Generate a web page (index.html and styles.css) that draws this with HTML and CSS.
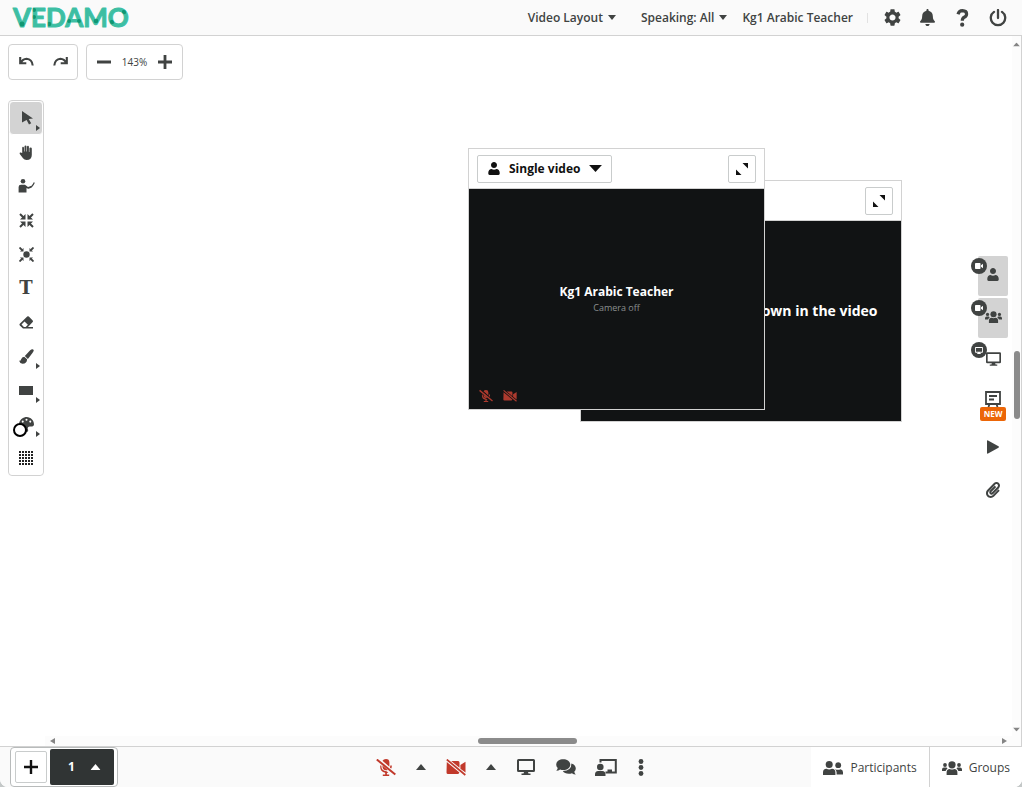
FILE: index.html
```html
<!DOCTYPE html>
<html lang="en">
<head>
<meta charset="utf-8">
<meta name="viewport" content="width=device-width, initial-scale=1">
<title>Vedamo classroom</title>
<link rel="stylesheet" href="styles.css">
</head>
<body>
<svg class="sprite" aria-hidden="true">
  <symbol id="user" viewBox="0 0 448 512"><path d="M224 240c66 0 118-54 118-120S290 0 224 0 106 54 106 120s52 120 118 120zM130 276C55 276 0 340 0 415v50c0 26 21 47 48 47h352c27 0 48-21 48-47v-50c0-75-55-139-130-139-26 17-58 26-94 26s-68-9-94-26z"/></symbol>
  <symbol id="users" viewBox="0 0 20 14"><circle cx="10" cy="3.800" r="3.600"/><path d="M4.600 14V11.500q0-3.500 3.200-3.500q2.200 1 4.400 0q3.200 0 3.200 3.500V14z"/><circle cx="3" cy="4" r="1.900"/><circle cx="17" cy="4" r="1.900"/><path d="M0 10V8.500Q0 6.500 2 6.500H4.500L5.500 7.500Q4 8.500 3.600 10zM20 10V8.500Q20 6.500 18 6.500H15.500L14.500 7.500Q16 8.500 16.400 10z"/></symbol>
  <symbol id="pair" viewBox="0 0 20 14"><circle cx="6.200" cy="3.500" r="3.500"/><path d="M0 14V11.500Q0 7.800 3.500 7.800Q6 9 9 7.800Q12.400 7.800 12.400 11.500V14z"/><circle cx="15.200" cy="4.200" r="2.900"/><path d="M12 8.200Q15 9.200 17.500 8.200Q20 8.500 20 11.200V13.500H13.600V11.500Q13.600 9.500 12 8.200z"/></symbol>
  <symbol id="cam" viewBox="0 0 16 12"><rect width="11" height="12" rx="1.500"/><path d="M12 4.500L16 1.500V10.500L12 7.500z"/></symbol>
  <symbol id="screen" viewBox="0 0 18 16"><path fill-rule="evenodd" d="M1.500 0H16.500Q18 0 18 1.500V11.500Q18 13 16.500 13H11L11.500 14.500H13.500V16H4.500V14.500H6.500L7 13H1.500Q0 13 0 11.500V1.500Q0 0 1.500 0zM2 2V11H16V2z"/></symbol>
  <symbol id="micoff" viewBox="0 0 20 17"><path d="M6.500 1.800Q7.500 0 10 0Q13.400 0 13.400 3.400V7.800zM6.500 6.500L11.800 11Q6.500 12 6.500 7.500zM14.300 6.500H15.800Q15.900 8.400 15.200 9.600L14 8.700zM4.200 6.500H5.400Q5 11.600 10.500 12.300L12.400 13.500L10.900 13.900V15.500H13.200V17H6.800V15.500H9.200V13.800Q4.200 12.800 4.200 8z"/><path d="M.8.500L19.300 15.600" fill="none" stroke="currentColor" stroke-width="2"/></symbol>
  <symbol id="camoff" viewBox="0 0 20 17"><path d="M5.200 2H12.200Q13.500 2 13.500 3.500V8.700zM.8 3L13.400 13.600Q13 15 12 15H2Q.5 15 .5 13.500zM14.400 6L19.500 2.700V13.600L14.400 9.700z"/><path d="M.8.500L19.300 16" fill="none" stroke="currentColor" stroke-width="1.700"/></symbol>
  <symbol id="up" viewBox="0 0 10 6"><path d="M5 0L10 6H0z"/></symbol>
  <symbol id="down" viewBox="0 0 10 6"><path d="M0 0H10L5 6z"/></symbol>
  <symbol id="expand" viewBox="0 0 12 12"><path d="M6.500 0H12V5.500zM0 6.500V12H5.500z"/></symbol>
  <symbol id="plus" viewBox="0 0 14 14"><path d="M5.600 0H8.400V5.600H14V8.400H8.400V14H5.600V8.400H0V5.600H5.600z"/></symbol>
  <symbol id="bend" viewBox="0 0 15 10"><path d="M1.200 0V6.300H7.300M2 5.800Q3.500 2 7.600 1.800Q13 2.200 13.700 8.500" fill="none" stroke="currentColor" stroke-width="2.100"/></symbol>
</svg>

<div class="app">
  <header class="topbar">
    <a class="brand" href="#" aria-label="Vedamo">
      <svg width="122" height="26" viewBox="0 0 122 26">
        <defs>
          <pattern id="logo-fill" patternUnits="userSpaceOnUse" width="122" height="26">
            <rect width="122" height="26" fill="#3dbea3"/>
            <g fill="#0f9672"><circle cx="10" cy="19" r="2.500"/><circle cx="22" cy="5" r="2"/><circle cx="22" cy="12" r="2"/><circle cx="37" cy="19" r="2.300"/><circle cx="57" cy="16" r="2"/><circle cx="67" cy="16" r="2"/><circle cx="84" cy="16" r="2.300"/><circle cx="112" cy="7" r="2.200"/><circle cx="100" cy="17" r="2.200"/></g>
          </pattern>
        </defs>
        <text x="1" y="22">VEDAMO</text>
      </svg>
    </a>
    <nav class="menus">
      <button class="menu">Video Layout <svg class="caret"><use href="#down"/></svg></button>
      <button class="menu">Speaking: All <svg class="caret"><use href="#down"/></svg></button>
      <span class="who">Kg1 Arabic Teacher</span>
    </nav>
    <div class="actions">
      <button aria-label="Settings"><svg width="17" height="17" viewBox="2 2 20 20"><path d="M19.140 12.940c.04-.3.06-.61.06-.94 0-.32-.02-.64-.07-.94l2.030-1.580c.18-.14.23-.41.12-.61l-1.920-3.320c-.12-.22-.37-.29-.59-.22l-2.390.96c-.5-.38-1.030-.7-1.620-.94l-.36-2.540c-.04-.24-.24-.41-.48-.41h-3.840c-.24 0-.43.17-.47.41l-.36 2.540c-.59.24-1.130.57-1.620.94l-2.390-.96c-.22-.08-.47 0-.59.22L2.740 8.870c-.12.21-.08.47.12.61l2.030 1.580c-.05.3-.09.63-.09.94s.02.64.07.94l-2.030 1.580c-.18.14-.23.41-.12.61l1.920 3.320c.12.22.37.29.59.22l2.390-.96c.5.38 1.030.7 1.620.94l.36 2.540c.05.24.24.41.48.41h3.840c.24 0 .44-.17.47-.41l.36-2.540c.59-.24 1.130-.56 1.620-.94l2.390.96c.22.08.47 0 .59-.22l1.920-3.320c.12-.22.07-.47-.12-.61l-2.010-1.580zM12 15.600c-1.980 0-3.600-1.620-3.600-3.600s1.620-3.600 3.600-3.600 3.600 1.620 3.600 3.600-1.620 3.600-3.600 3.600z"/></svg></button>
      <button aria-label="Notifications"><svg width="15" height="17" viewBox="0 0 448 512"><path d="M224 512c35 0 64-29 64-64H160c0 35 29 64 64 64zm215-150c-19-21-55-52-55-154 0-78-54-140-128-155V32c0-18-14-32-32-32s-32 14-32 32v21C119 68 64 130 64 208c0 102-36 133-55 154-6 6-9 14-9 22 0 16 13 32 32 32h384c19 0 32-16 32-32 0-8-3-15-9-22z"/></svg></button>
      <button aria-label="Help"><svg width="13" height="18" viewBox="0 0 13 18"><path d="M2 5.200Q3 1.800 6.400 1.700Q10.600 1.900 10.600 5Q10.600 7.200 8.200 8.300Q6.300 9.200 6.300 11.800" fill="none" stroke="currentColor" stroke-width="3.200"/><circle cx="6.200" cy="15.700" r="2.100"/></svg></button>
      <button aria-label="Leave"><svg width="18" height="18" viewBox="0 0 18 18"><path d="M5 2.900A7.200 7.200 0 1 0 13 2.900M9 1V9" fill="none" stroke="currentColor" stroke-width="2.300" stroke-linecap="round"/></svg></button>
    </div>
  </header>

  <main class="board">
    <div class="stage">
      <div class="history">
        <div class="group">
          <button aria-label="Undo"><svg width="15" height="10"><use href="#bend"/></svg></button>
          <button aria-label="Redo"><svg class="flip" width="15" height="10"><use href="#bend"/></svg></button>
        </div>
        <div class="group zoom">
          <button aria-label="Zoom out"><svg width="14" height="14" viewBox="0 0 14 14"><path d="M0 5.500H14V8.500H0z"/></svg></button>
          <span>143%</span>
          <button aria-label="Zoom in"><svg width="14" height="14"><use href="#plus"/></svg></button>
        </div>
      </div>

      <div class="tools">
        <button class="more on" aria-label="Select"><svg width="13" height="14" viewBox="0 0 13 14"><path d="M2 0L13 7.500L8.700 8L11.200 12.300L9 13.500L6.600 9L2 11.500z"/></svg></button>
        <button aria-label="Pan"><svg width="14" height="15" viewBox="0 0 14 15"><path d="M3.200 8V3Q3.200 1.800 4 1.800Q4.900 1.800 5 3V6.500H5.500V1.500Q5.600.4 6.500.4Q7.400.4 7.500 1.500V6.500H8V1.700Q8.100.7 9 .7Q9.800.7 9.900 1.700V7H10.400V3.500Q10.500 2.500 11.500 2.500Q12.800 2.600 12.800 3.500V10Q12.800 15 7.500 15Q5.300 15 4 13.300L.8 8.900Q.3 8 1.100 7.500Q2 7.100 3.200 8z"/></svg></button>
        <button aria-label="Presenter pointer"><svg width="17" height="14" viewBox="0 0 17 14"><circle cx="5" cy="2.300" r="2.300"/><path d="M.6 13.500V8Q.6 5.700 3 5.700H7L10 8.100L13 7L13.500 8.200L10 9.800L8.500 9V13.500z"/><path d="M10 9Q14 9 16.300 3.500" fill="none" stroke="currentColor" stroke-width="1.200"/></svg></button>
        <button aria-label="Gather all"><svg width="15" height="15" viewBox="0 0 15 15"><path d="M1 1L4.500 4.500M14 1L10.500 4.500M1 14L4.500 10.500M14 14L10.500 10.500" fill="none" stroke="currentColor" stroke-width="2"/><path d="M6.500 1V6.500H1zM8.500 1V6.500H14zM6.500 14V8.500H1zM8.500 14V8.500H14z"/></svg></button>
        <button aria-label="Focus here"><svg width="15" height="15" viewBox="0 0 15 15"><circle cx="7.500" cy="7.500" r="3.200"/><path d="M.5.500L3 3M14.500.500L12 3M.5 14.500L3 12M14.500 14.500L12 12" fill="none" stroke="currentColor" stroke-width="1.800"/><path d="M4.500 1V4.500H1zM10.500 1V4.500H14zM4.500 14V10.500H1zM10.500 14V10.500H14z"/></svg></button>
        <button class="type" aria-label="Text">T</button>
        <button aria-label="Eraser"><svg width="15" height="13" viewBox="0 0 15 13"><path fill-rule="evenodd" d="M8.200.6Q9 0 9.800.6L13.700 4.500Q14.400 5.300 13.700 6.100L9 11H14V12.600H4L.8 9.400Q0 8.500.8 7.700zM5.500 5.500L2.500 8.500L4.900 10.900H6.700L8.900 8.700z"/></svg></button>
        <button class="more" aria-label="Brush"><svg width="15" height="15" viewBox="0 0 15 15"><path d="M12.300.4Q14.300-.4 14.800 1.600Q14.300 3.500 8.900 9.900L5.800 7Q10.500 1.500 12.300.4zM5.200 7.700L8.100 10.300Q8 14.700 3.500 14.800Q.8 14.500 0 11.500Q1.600 12.500 2 10.500Q2.900 7.700 5.200 7.700z"/></svg></button>
        <button class="more" aria-label="Rectangle"><svg width="14" height="9" viewBox="0 0 14 9"><path d="M0 0H14V9H0z"/></svg></button>
        <button class="more colour" aria-label="Colour"><svg width="15" height="15" viewBox="0 0 512 512"><path d="M204 5C105 24 25 104 5 203c-37 187 132 327 259 307 41-6 61-55 42-92-23-45 10-98 61-98h80c36 0 65-30 65-65C512 97 368-27 204 5zM96 320a35 35 0 1 1 0-70 35 35 0 0 1 0 70zm32-128a35 35 0 1 1 0-70 35 35 0 0 1 0 70zm128-64a35 35 0 1 1 0-70 35 35 0 0 1 0 70zm128 64a35 35 0 1 1 0-70 35 35 0 0 1 0 70z"/></svg></button>
        <button aria-label="Grid"><svg width="14" height="14" viewBox="0 0 14 14"><path d="M0 1H14M0 4H14M0 7H14M0 10H14M0 13H14" stroke="#222" stroke-width="2" stroke-dasharray="2 1"/></svg></button>
      </div>
    </div>

    <section class="window back" aria-label="Group video">
      <div class="bar"><span></span><button class="square" aria-label="Expand"><svg width="12" height="12"><use href="#expand"/></svg></button></div>
      <div class="feed"><p class="notice">There are no guests shown in the video layout</p></div>
    </section>
    <section class="window front" aria-label="Single video">
      <div class="bar">
        <button class="pick"><svg width="12" height="13"><use href="#user"/></svg><span>Single video</span><svg width="13" height="7" viewBox="0 0 11 6"><path d="M0 0H11L5.500 6z"/></svg></button>
        <button class="square" aria-label="Expand"><svg width="12" height="12"><use href="#expand"/></svg></button>
      </div>
      <div class="feed person">
        <p class="name">Kg1 Arabic Teacher</p>
        <p class="state">Camera off</p>
        <div class="muted"><svg width="14" height="14"><use href="#micoff"/></svg><svg width="14" height="14"><use href="#camoff"/></svg></div>
      </div>
    </section>

    <div class="panels">
      <button class="panel on" aria-label="Single video window"><span class="badge"><svg width="8" height="6"><use href="#cam"/></svg></span><svg width="12" height="13"><use href="#user"/></svg></button>
      <button class="panel on" aria-label="Group video window"><span class="badge"><svg width="8" height="6"><use href="#cam"/></svg></span><svg width="17" height="12"><use href="#users"/></svg></button>
      <button class="panel" aria-label="Screen share"><span class="badge"><svg width="8" height="7"><use href="#screen"/></svg></span><svg width="15" height="14"><use href="#screen"/></svg></button>
      <button class="panel tall fresh" aria-label="Whiteboards"><svg width="16" height="16" viewBox="0 0 16 16"><path d="M1 1H15V13H1zM4 5H12M4 8.500H9M4.500 13L3.500 16M11.500 13L12.500 16" fill="none" stroke="currentColor" stroke-width="1.800"/></svg><span class="new">NEW</span></button>
      <button class="panel tall" aria-label="Play media"><svg width="12" height="14" viewBox="0 0 12 14"><path d="M0 1Q0 0 1 .4L11.500 6.300Q12.300 7 11.500 7.700L1 13.600Q0 14 0 13z"/></svg></button>
      <button class="panel last" aria-label="Files"><svg width="14" height="16" viewBox="0 0 448 512"><path d="M43 466c-58-60-57-157 2-217L254 34c45-45 117-45 161 0 44 45 44 117 0 162L232 383c-30 31-78 30-108-1-28-30-27-77 2-107l143-147c7-6 17-6 23 0l23 23c6 6 6 16 0 22L171 320c-5 5-5 13 0 18 4 5 11 5 15 0l183-186c20-21 20-53 0-73-19-20-50-20-69 0L90 293c-34 36-35 93-1 129 34 35 89 35 123 0l172-176c7-6 17-6 23 0l23 22c6 6 6 16 0 23L258 467c-60 60-156 60-215-1z"/></svg></button>
    </div>
    <div class="vscroll"><svg width="7" height="5" viewBox="0 0 10 6"><use href="#up"/></svg><span class="thumb"></span><svg width="7" height="5" viewBox="0 0 10 6"><use href="#down"/></svg></div>
    <div class="hscroll"><svg width="5" height="6" viewBox="0 0 5 6"><path d="M5 0V6L0 3z"/></svg><span class="thumb"></span><svg width="5" height="6" viewBox="0 0 5 6"><path d="M0 0V6L5 3z"/></svg></div>
  </main>

  <footer class="dock">
    <div class="pages">
      <button class="add" aria-label="Add page"><svg width="14" height="14" viewBox="0 0 14 14"><path d="M5.800 0H8.200V5.800H14V8.200H8.200V14H5.800V8.200H0V5.800H5.800z"/></svg></button>
      <button class="page"><span>1</span><svg width="11" height="6" viewBox="0 0 10 6"><use href="#up"/></svg></button>
    </div>
    <div class="media">
      <button class="off" aria-label="Microphone off"><svg width="20" height="17"><use href="#micoff"/></svg></button>
      <button class="slim" aria-label="Microphone options"><svg width="10" height="6"><use href="#up"/></svg></button>
      <button class="off" aria-label="Camera off"><svg width="20" height="17"><use href="#camoff"/></svg></button>
      <button class="slim" aria-label="Camera options"><svg width="10" height="6"><use href="#up"/></svg></button>
      <button aria-label="Share screen"><svg width="18" height="16"><use href="#screen"/></svg></button>
      <button aria-label="Chat"><svg width="20" height="16" viewBox="0 0 20 16"><path d="M7.200.3C11.200.3 14.300 2.700 14.300 5.700S11.200 11 7.200 11Q5.600 11 4.200 10.500Q2.500 11.700.3 11.700Q1.600 10.300 1.700 9Q.2 7.500.2 5.700C.2 2.700 3.200.3 7.200.3z"/><path d="M15.400 4.400Q19.800 5.800 19.800 9.500Q19.800 11.300 18.300 12.800Q18.500 14.200 19.800 15.600Q17.600 15.600 15.900 14.300Q14.500 14.800 12.800 14.800Q8.500 14.700 6.800 12.100Q15.500 11.700 15.400 4.400z"/></svg></button>
      <button aria-label="Teaching mode"><svg width="22" height="17" viewBox="0 0 22 17"><circle cx="5.300" cy="8" r="3.300"/><path d="M0 17V15.500Q0 12 3.200 12H7.400Q10.500 12 10.500 15.500V17zM12.500 13V10.500H17V13z"/><path d="M5.500 3.500V1H20.800V13.500H10.500" fill="none" stroke="currentColor" stroke-width="2"/></svg></button>
      <button class="slim" aria-label="More"><svg width="6" height="17" viewBox="0 0 6 17"><circle cx="3" cy="2.500" r="2.400"/><circle cx="3" cy="8.500" r="2.400"/><circle cx="3" cy="14.500" r="2.400"/></svg></button>
    </div>
    <div class="people">
      <button><svg width="20" height="14"><use href="#pair"/></svg>Participants</button>
      <button><svg width="20" height="14"><use href="#users"/></svg>Groups</button>
    </div>
  </footer>
</div>
</body>
</html>
```
FILE: styles.css
```css
* { box-sizing: border-box; }
html, body { height: 100%; }
body { margin: 0; background: #c4c8c8; color: #404342; font: 12px/16px "Open Sans", "Noto Sans", sans-serif; }
p { margin: 0; }
button { display: flex; align-items: center; justify-content: center; margin: 0; padding: 0; border: 0; background: none; color: inherit; font: inherit; cursor: pointer; }
svg { display: block; flex: none; fill: currentColor; }
.sprite { position: absolute; width: 0; height: 0; }

.app { display: flex; flex-direction: column; height: 100vh; background: #fff; border-radius: 0 0 8px 8px; overflow: hidden; }

.topbar { display: flex; align-items: center; flex: none; height: 36px; padding: 0 7px 0 12px; background: #fafafa; border-bottom: 1px solid #d2d2d2; font-weight: 600; }
.brand { margin-right: auto; }
.brand svg { overflow: visible; }
.brand text { font: 700 26px/26px Lato, sans-serif; fill: url(#logo-fill); stroke: url(#logo-fill); stroke-width: 1px; stroke-linejoin: round; }
.menus { display: flex; align-items: center; gap: 25px; padding-right: 14px; }
.menu { gap: 5px; white-space: nowrap; }
.caret { width: 8px; height: 5px; }
.who { margin-left: -10px; white-space: nowrap; }
.actions { display: flex; align-items: center; padding-left: 8px; background: linear-gradient(#e2e2e2, #e2e2e2) 0 center / 1px 10px no-repeat; }
.actions button { width: 35px; height: 35px; }

.board { position: relative; flex: 1; min-height: 0; border-right: 1px solid #d2d2d2; overflow: hidden; }
.stage { display: flex; flex-direction: column; align-items: flex-start; gap: 20px; padding: 8px; }
.history { display: flex; gap: 8px; }
.group { display: flex; align-items: center; height: 36px; border: 1px solid #d2d2d2; border-radius: 4px; background: #fff; }
.group button { width: 34px; height: 34px; }
.zoom { font-size: 10px; }
.zoom span { width: 27px; text-align: center; }
.flip { transform: scaleX(-1); }

.tools { width: 36px; border: 1px solid #d2d2d2; border-radius: 4px; background: #fff; }
.tools button { position: relative; width: 34px; height: 34px; border: 1px solid #fff; border-radius: 4px; }
.tools .on { background: #d3d3d3; }
.tools .more::after { content: ""; position: absolute; right: 2px; bottom: 3px; border: 3px solid transparent; border-left: 4px solid #404342; border-right: 0; }
.tools .type { font: 700 18px/18px "DejaVu Serif", serif; }
.tools .colour::before { content: ""; position: absolute; left: 3px; bottom: 3px; width: 10px; height: 10px; border: 2px solid #000; border-radius: 50%; background: #fff; }

.window { position: absolute; display: flex; flex-direction: column; border: 1px solid #d2d2d2; background: #fff; color: #111; }
.back { left: 580px; top: 144px; width: 322px; height: 242px; }
.front { left: 468px; top: 112px; width: 297px; height: 262px; }
.bar { display: flex; align-items: center; justify-content: space-between; flex: none; height: 40px; padding: 0 8px; border-bottom: 1px solid #d2d2d2; }
.square, .pick { height: 28px; border: 1px solid #c9cccc; border-radius: 2px; background: #fff; }
.square { width: 28px; }
.pick { gap: 9px; padding: 0 9px 0 10px; font-weight: 700; }
.feed { position: relative; display: flex; flex-direction: column; align-items: center; justify-content: center; flex: 1; background: #111314; color: #fff; text-align: center; }
.notice { width: 290px; font: 700 14px/21px "Open Sans", sans-serif; }
.person { padding-top: 2px; }
.name { font-weight: 700; }
.state { color: #8b8f8f; font-size: 9px; }
.muted { position: absolute; left: 10px; bottom: 6px; display: flex; gap: 10px; color: #ad3a2e; }

.panels { position: absolute; top: 220px; right: 13px; display: grid; gap: 2px; }
.panel { position: relative; width: 30px; height: 40px; padding-bottom: 3px; border-radius: 2px; }
.panel.on { background: #d3d3d3; }
.tall { height: 42px; padding: 0; }
.last { padding: 0; }
.badge { position: absolute; left: -7px; top: 2px; display: grid; place-items: center; width: 16px; height: 16px; border-radius: 50%; background: #404342; color: #fff; }
.fresh { flex-direction: column; padding-top: 6px; }
.new { padding: 0 4px; border-radius: 2px; background: #ec6608; color: #fff; font: 700 8px/14px "Open Sans", sans-serif; }

.vscroll, .hscroll { position: absolute; display: flex; align-items: center; justify-content: space-between; background: #fcfcfc; color: #858585; }
.vscroll { top: 0; right: 0; bottom: 10px; flex-direction: column; width: 9px; padding: 6px 0 4px; }
.hscroll { left: 45px; right: 0; bottom: 0; height: 10px; padding: 0 14px 0 5px; }
.thumb { border-radius: 3px; background: #8b8b8b; }
.vscroll .thumb { width: 6px; height: 68px; margin-bottom: 4px; }
.hscroll .thumb { width: 99px; height: 6px; margin-right: 2px; }

.dock { display: grid; grid-template-columns: 1fr auto 1fr; flex: none; height: 41px; border-top: 1px solid #d2d2d2; background: #fafafa; }
.pages { display: flex; align-items: center; justify-self: start; gap: 3px; margin-left: 10px; padding: 0 3px 0 4px; border: 1px solid #b8bbbb; border-radius: 4px; background: #fff; color: #111; }
.add { width: 32px; height: 32px; border: 1px solid #c9cccc; border-radius: 2px; }
.page { gap: 15px; width: 64px; height: 36px; padding-left: 5px; border-radius: 2px; background: #303434; color: #fff; font-weight: 700; }
.media { display: flex; }
.media button { width: 40px; height: 40px; }
.media .slim { width: 30px; }
.off { color: #c1392b; }
.people { display: flex; justify-self: end; background: #fff; }
.people button { gap: 7px; padding: 2px 12px 0 12px; }
.people button + button { border-left: 1px solid #d2d2d2; }
```
